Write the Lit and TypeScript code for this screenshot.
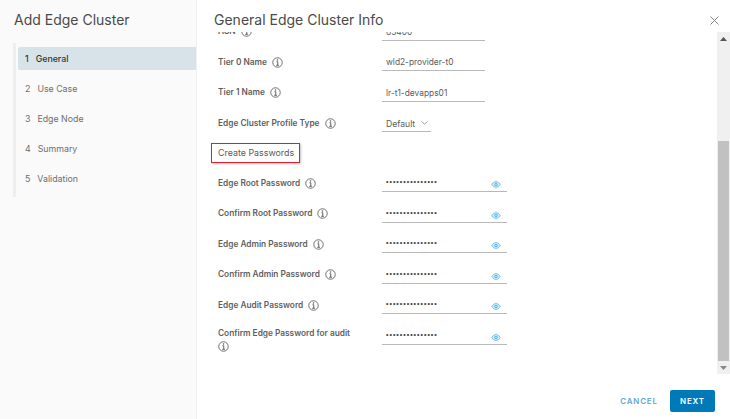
import { LitElement, html, css, svg } from "lit";
import { customElement } from "lit/decorators.js";

const info = html`<svg class="info" width="11" height="11" viewBox="0 0 13 13" fill="none">
  <circle cx="6.5" cy="6.5" r="5.6" stroke="#666" stroke-width="1.1"/>
  <path d="M5.3 5.6H6.8V9.6M5 9.8H8.2" stroke="#555" stroke-width="1.1"/>
  <circle cx="6.5" cy="3.6" r=".9" fill="#555"/>
</svg>`;

const eye = svg`<svg class="eye" width="10" height="7" viewBox="0 0 11 8" fill="none">
  <path d="M.6 4C2 1.7 3.6.7 5.5.7S9 1.7 10.4 4C9 6.3 7.4 7.3 5.5 7.3S2 6.3.6 4Z" stroke="#6cc0ea" stroke-width="1" fill="#cdeaf9"/>
  <circle cx="5.5" cy="4" r="1.9" fill="#5db8e6"/>
  <circle cx="5.5" cy="4" r=".8" fill="#d8f0fb"/>
</svg>`;

const steps = ["General", "Use Case", "Edge Node", "Summary", "Validation"];
const plain: [string, string][] = [
  ["Tier 0 Name", "wld2-provider-t0"],
  ["Tier 1 Name", "lr-t1-devapps01"],
];
const passwords = [
  "Edge Root Password",
  "Confirm Root Password",
  "Edge Admin Password",
  "Confirm Admin Password",
  "Edge Audit Password",
];

@customElement("app-root")
export class AppRoot extends LitElement {
  static styles = css`
    :host {
      display: flex;
      width: 730px;
      height: 419px;
      overflow: hidden;
      font-family: Inter, "Noto Sans", sans-serif;
      color: #565656;
      background: #fff;
    }
    .side {
      width: 197px;
      flex: none;
      box-sizing: border-box;
      background: #fafafa;
      border-right: 1px solid #f1f1f1;
      padding-top: 11px;
    }
    h1 {
      margin: 0;
      font-size: 14px;
      line-height: 18px;
      font-weight: 400;
      color: #4a4a4a;
    }
    .side h1 { padding-left: 14px; }
    .nav {
      margin: 14px 0 0 13px;
      border-left: 3px solid #eeeeee;
      height: 150px;
      padding: 4px 0 0 2px;
      display: flex;
      flex-direction: column;
    }
    .step {
      height: 30px;
      display: flex;
      align-items: center;
      gap: 7px;
      padding-left: 7px;
      font-size: 8.8px;
      color: #6e6e6e;
    }
    .step.on {
      height: 23px;
      margin-bottom: 3.5px;
      background: #d8e3e9;
      border-radius: 2px 0 0 2px;
      color: #333;
      font-weight: 500;
    }
    .main {
      flex: 1;
      min-width: 0;
      display: flex;
      flex-direction: column;
    }
    .head {
      height: 32px;
      flex: none;
      box-sizing: border-box;
      padding: 11px 11px 0 17px;
      display: flex;
      justify-content: space-between;
    }
    .close { margin-top: 5px; }
    .body {
      height: 342px;
      flex: none;
      display: flex;
    }
    .scroll {
      flex: 1;
      min-width: 0;
      overflow: hidden;
      padding-left: 21px;
    }
    .form { margin-top: -22px; }
    .row {
      display: grid;
      grid-template-columns: 164px 125px;
      grid-template-rows: 30.5px;
      align-items: end;
    }
    .label {
      font-size: 8.3px;
      font-weight: 600;
      line-height: 13px;
      color: #5f5f5f;
      display: flex;
      align-items: center;
      gap: 5px;
      align-self: end;
      margin-bottom: 2.5px;
    }
    .label.wrap { display: block; align-self: start; margin: 13px 0 0; }
    .label.wrap .info { display: block; margin-top: 1px; }
    .field {
      box-sizing: border-box;
      height: 21px;
      width: 103px;
      border-bottom: 1px solid #b9b9b9;
      padding: 0 0 3px 4px;
      font-size: 8.4px;
      color: #5b5b5b;
      display: flex;
      align-items: flex-end;
      justify-content: space-between;
    }
    .field.pw { width: 125px; padding-right: 6px; }
    .dots {
      font-size: 7px;
      letter-spacing: 1px;
      color: #444;
      line-height: 12px;
      font-family: "Liberation Sans", sans-serif;
      font-weight: 700;
    }
    .eye { margin-bottom: 0; }
    .field.sel {
      width: 49px;
      gap: 6px;
      justify-content: flex-start;
      padding-bottom: 2px;
      font-size: 8.6px;
    }
    .field.sel svg { margin-bottom: 4px; }
    .section {
      display: flow-root;
      height: 29.5px;
    }
    .boxed {
      margin: 10.5px 0 0 -7px;
      box-sizing: border-box;
      height: 20px;
      width: 89px;
      padding-left: 6px;
      border: 1.5px solid #d8232f;
      box-shadow: 1px 1px 2px rgba(0, 0, 0, 0.25);
      display: flex;
      align-items: center;
      font-size: 8.9px;
      color: #5a5a5a;
      white-space: nowrap;
    }
    .bar {
      width: 13px;
      flex: none;
      background: #f0f0f0;
      display: flex;
      flex-direction: column;
      align-items: center;
    }
    .arrow { height: 13px; flex: none; display: flex; align-items: center; justify-content: center; }
    .track { flex: 1; width: 100%; padding-top: 96px; box-sizing: border-box; display: flex; flex-direction: column; align-items: center; }
    .thumb { width: 11px; flex: 1; background: #c1c1c1; }
    .foot {
      flex: 1;
      display: flex;
      justify-content: flex-end;
      align-items: flex-start;
      gap: 13px;
      padding: 16px 15px 0 0;
    }
    .btn {
      height: 22px;
      box-sizing: border-box;
      display: flex;
      align-items: center;
      justify-content: center;
      font-size: 8px;
      font-weight: 600;
      letter-spacing: 0.8px;
    }
    .cancel { color: #62a8d3; width: 36px; }
    .next { color: #fff; background: #0079b8; width: 45px; border-radius: 2px; }
  `;

  render() {
    return html`
      <div class="side">
        <h1>Add Edge Cluster</h1>
        <div class="nav">
          ${steps.map(
            (s, i) => html`<div class="step ${i === 0 ? "on" : ""}"><span>${i + 1}</span><span>${s}</span></div>`
          )}
        </div>
      </div>
      <div class="main">
        <div class="head">
          <h1>General Edge Cluster Info</h1>
          <svg class="close" width="9" height="9" viewBox="0 0 9 9" fill="none">
            <path d="M.5.5 8.5 8.5M8.5.5.5 8.5" stroke="#808080" stroke-width="1"/>
          </svg>
        </div>
        <div class="body">
          <div class="scroll">
            <div class="form">
              <div class="row">
                <div class="label">ASN ${info}</div>
                <div class="field">65400</div>
              </div>
              ${plain.map(
                ([l, v]) => html`<div class="row">
                  <div class="label">${l} ${info}</div>
                  <div class="field">${v}</div>
                </div>`
              )}
              <div class="row">
                <div class="label">Edge Cluster Profile Type ${info}</div>
                <div class="field sel">
                  Default
                  <svg width="7" height="4" viewBox="0 0 7 4" fill="none"><path d="M.5.5 3.5 3.2 6.5.5" stroke="#888" stroke-width=".8"/></svg>
                </div>
              </div>
              <div class="section"><div class="boxed">Create Passwords</div></div>
              ${passwords.map(
                (l) => html`<div class="row">
                  <div class="label">${l} ${info}</div>
                  <div class="field pw"><span class="dots">•••••••••••••••</span>${eye}</div>
                </div>`
              )}
              <div class="row">
                <div class="label wrap">Confirm Edge Password for audit ${info}</div>
                <div class="field pw"><span class="dots">•••••••••••••••</span>${eye}</div>
              </div>
            </div>
          </div>
          <div class="bar">
            <div class="arrow"><svg width="7" height="4" viewBox="0 0 7 4"><path d="M3.5 0 7 4H0Z" fill="#555"/></svg></div>
            <div class="track"><div class="thumb"></div></div>
            <div class="arrow"><svg width="7" height="4" viewBox="0 0 7 4"><path d="M0 0H7L3.5 4Z" fill="#888"/></svg></div>
          </div>
        </div>
        <div class="foot">
          <div class="btn cancel">CANCEL</div>
          <div class="btn next">NEXT</div>
        </div>
      </div>
    `;
  }
}
